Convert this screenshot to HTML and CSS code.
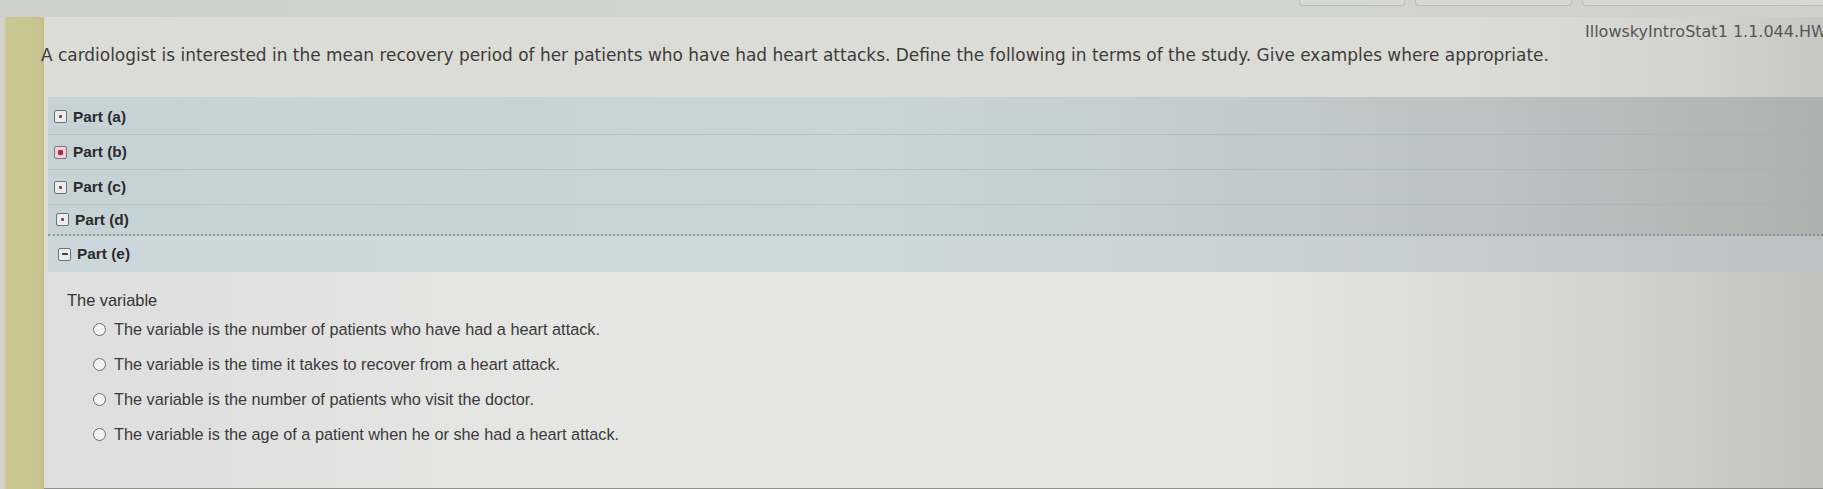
FILE: index.html
```html
<!DOCTYPE html>
<html lang="en">
<head>
<meta charset="utf-8">
<title>Homework</title>
<link rel="stylesheet" href="styles.css">
</head>
<body>
<div class="topbar">
  <div class="tabs">
    <span class="tab tab1"></span>
    <span class="tab tab2"></span>
    <span class="tab tab3"></span>
  </div>
</div>
<div class="frame">
  <div class="sidebar"></div>
  <div class="main">
    <div class="hdr"><span class="code">IllowskyIntroStat1 1.1.044.HW</span></div>
    <p class="question">A cardiologist is interested in the mean recovery period of her patients who have had heart attacks. Define the following in terms of the study. Give examples where appropriate.</p>
    <div class="parts">
      <div class="part"><span class="ico"><span class="dot"></span></span>Part (a)</div>
      <div class="part"><span class="ico pink"><span class="dot"></span></span>Part (b)</div>
      <div class="part"><span class="ico"><span class="dot"></span></span>Part (c)</div>
      <div class="part last-closed"><span class="ico"><span class="dot"></span></span>Part (d)</div>
      <div class="part open"><span class="ico"><span class="dash"></span></span>Part (e)</div>
    </div>
    <div class="answer">
      <div class="prompt">The variable</div>
      <ul class="opts">
        <li><span class="radio"></span>The variable is the number of patients who have had a heart attack.</li>
        <li><span class="radio"></span>The variable is the time it takes to recover from a heart attack.</li>
        <li><span class="radio"></span>The variable is the number of patients who visit the doctor.</li>
        <li><span class="radio"></span>The variable is the age of a patient when he or she had a heart attack.</li>
      </ul>
    </div>
  </div>
</div>
</body>
</html>
```

FILE: styles.css
```css
html, body {
  margin: 0;
  padding: 0;
}
body {
  width: 1823px;
  height: 489px;
  overflow: hidden;
  background: #d6d7d3;
  font-family: "Liberation Sans", Arial, sans-serif;
  color: #333;
}
.topbar {
  height: 17px;
  background: linear-gradient(to right, #cdd0cc, #d3d5d0 60%, #cfd0cb);
  display: flex;
  justify-content: flex-end;
}
.tabs {
  display: flex;
  gap: 10px;
  height: 6px;
}
.tab {
  display: block;
  height: 5px;
  border: 1px solid #bcbeb8;
  border-top: none;
  border-radius: 0 0 4px 4px;
  background: #d6d8d3;
}
.tab1 { width: 104px; }
.tab2 { width: 155px; }
.tab3 { width: 240px; border-right: none; border-radius: 0 0 0 4px; }
.frame {
  display: flex;
  height: 472px;
}
.sidebar {
  width: 44px;
  flex: none;
  background: linear-gradient(to right, #d4d4cf 0, #d4d4cf 4px, #cbc793 6px, #c8c490 40px, #c0bc8a 44px);
}
.main {
  flex: 1;
  display: flex;
  flex-direction: column;
  background: linear-gradient(to right, rgba(0,0,0,0) 0, rgba(0,0,0,0) 80%, rgba(90,92,80,0.06) 92%, rgba(70,72,62,0.14) 100%), #dcdcd7;
  border-bottom: 1px solid #8f908b;
}
.hdr {
  height: 22px;
  padding-top: 6px;
  padding-left: 1541px;
  white-space: nowrap;
  overflow: hidden;
  font-family: "DejaVu Sans", Verdana, sans-serif;
  font-size: 16px;
  line-height: 18px;
  color: #555;
}
.question {
  margin: 0 0 32px -3px;
  font-family: "DejaVu Sans", Verdana, sans-serif;
  font-size: 16.95px;
  line-height: 20px;
  color: #3b3b3b;
  white-space: nowrap;
}
.parts {
  margin-left: 4px;
  padding-top: 2px;
  background: linear-gradient(to right, #c6d3d6 0, #c8d5d8 45%, #c4ced0 62%, #bcc3c2 80%, #adb2b0 100%);
}
.part {
  height: 35px;
  display: flex;
  align-items: center;
  gap: 6px;
  padding-left: 6px;
  font-size: 15.4px;
  font-weight: bold;
  color: #2b2b2b;
  border-top: 1px solid rgba(160,175,178,0.45);
  box-sizing: border-box;
}
.part:first-child {
  border-top: none;
}
.part.last-closed {
  height: 32px;
  padding-left: 8px;
  border-bottom: 2px dotted #8d969a;
}
.part.open {
  height: 36px;
  border-top: none;
  padding-left: 10px;
  background: rgba(215,224,228,0.35);
}
.ico {
  width: 11px;
  height: 11px;
  border: 1.5px solid #6e7274;
  border-radius: 2px;
  background: #e9eded;
  display: flex;
  align-items: center;
  justify-content: center;
  flex: none;
}
.ico.pink {
  background: #e6d4d8;
  border-color: #8a6f76;
}
.dot {
  width: 3px;
  height: 3px;
  background: #8a3b4a;
  border-radius: 1px;
}
.ico.pink .dot {
  width: 5px;
  height: 5px;
  background: #b02a48;
}
.dash {
  width: 6px;
  height: 1.5px;
  background: #444;
}
.answer {
  flex: 1;
  padding: 20px 0 0 23px;
  background: linear-gradient(to right, rgba(0,0,0,0) 0, rgba(0,0,0,0) 70%, rgba(80,82,70,0.08) 88%, rgba(70,72,62,0.18) 100%), linear-gradient(to right, #dedede 0, #e6e6e5 30%, #e6e6e4 60%, #dcdcd6 100%);
}
.prompt {
  font-size: 16.4px;
  line-height: 16px;
  color: #333;
}
.opts {
  list-style: none;
  margin: 13px 0 0 0;
  padding: 0 0 0 26px;
}
.opts li {
  display: flex;
  align-items: center;
  gap: 8px;
  height: 16px;
  margin-bottom: 19px;
  font-size: 16.3px;
  line-height: 16px;
  color: #3a3a3a;
  white-space: nowrap;
}
.radio {
  width: 11px;
  height: 11px;
  border: 1.5px solid #6d6d6d;
  border-radius: 50%;
  background: #f2f2f2;
  flex: none;
}
```
